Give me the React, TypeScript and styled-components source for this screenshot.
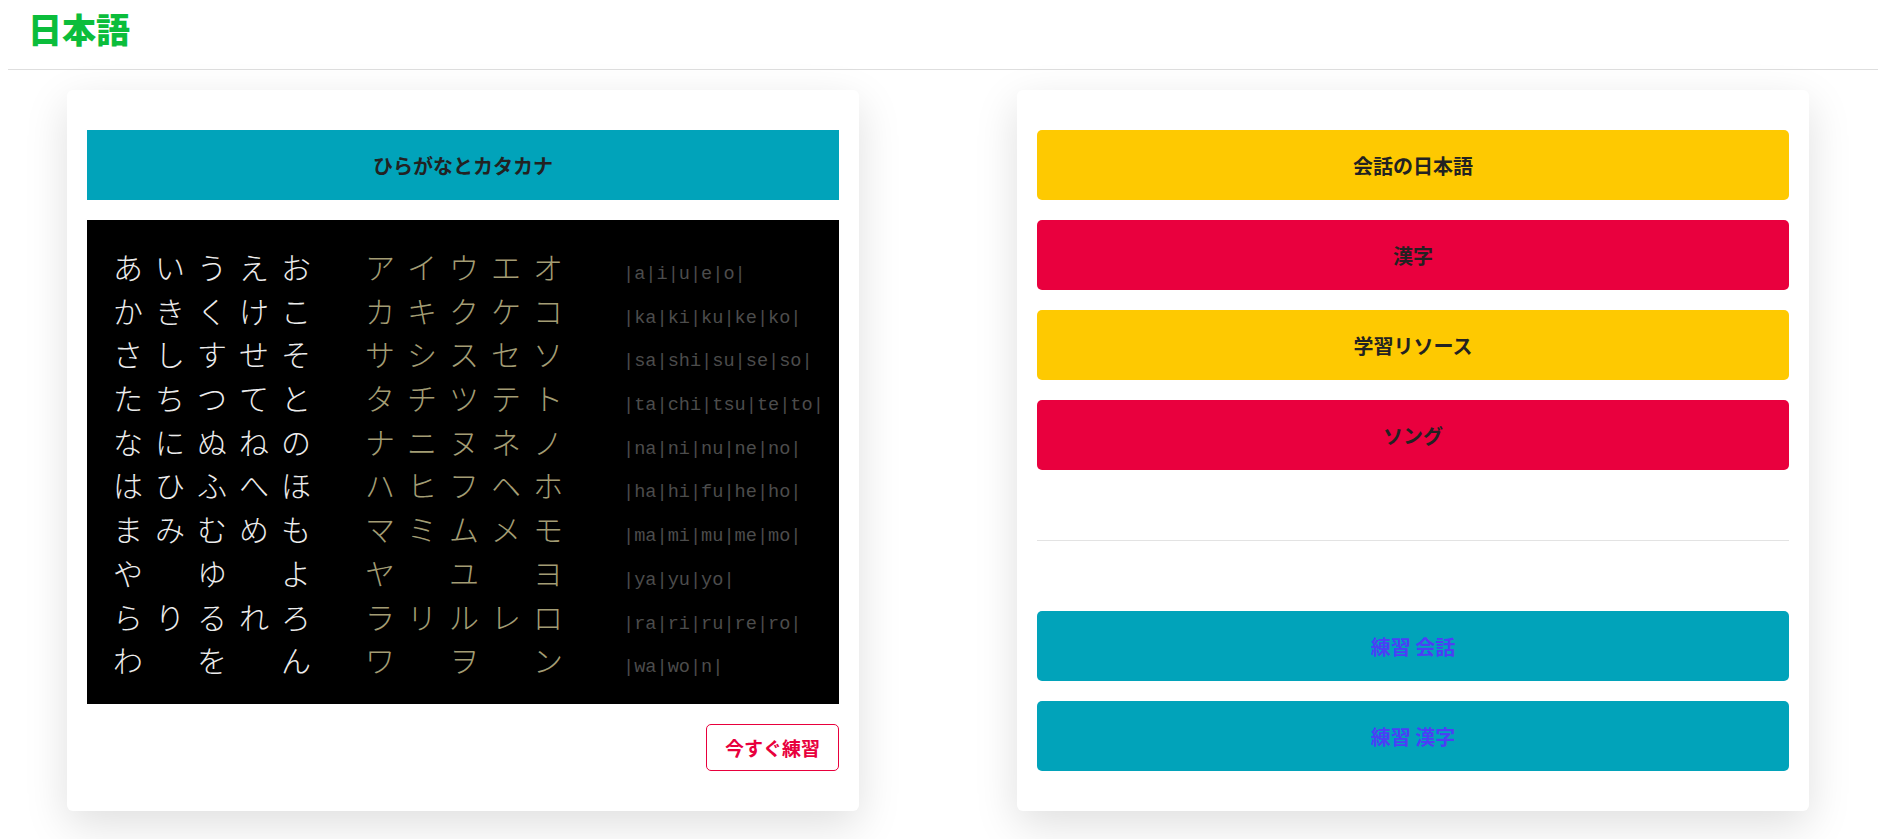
import React from "react";
import styled, { createGlobalStyle } from "styled-components";

const GlobalStyle = createGlobalStyle`
  * { box-sizing: border-box; }
  html, body { background: #ffffff; }
  body {
    margin: 8px;
    font-family: "Noto Sans CJK JP", "Noto Sans", sans-serif;
    color: #212529;
  }
`;

const Header = styled.header`
  height: 62px;
  border-bottom: 1px solid #dedede;
  padding: 0 0 0 20px;
  display: flex;
  align-items: flex-start;
`;

const Title = styled.h1`
  margin: 0;
  font-size: 34px;
  line-height: 42px;
  font-weight: 900;
  color: #0bbd3b;
`;

const Main = styled.main`
  display: grid;
  grid-template-columns: 792px 792px;
  column-gap: 158px;
  padding: 20px 0 40px 59px;
`;

const Card = styled.section`
  background: #ffffff;
  border-radius: 6px;
  box-shadow: 0 14px 44px rgba(0, 0, 0, 0.13);
  padding: 40px 20px;
  display: flex;
  flex-direction: column;
`;

const SectionBar = styled.div`
  height: 70px;
  background: #01a3ba;
  display: flex;
  align-items: center;
  justify-content: center;
  font-size: 20px;
  font-weight: 700;
  color: #222222;
`;

const Chart = styled.div`
  margin-top: 20px;
  height: 484px;
  background: #000000;
  padding: 25px 0 0 20px;
  display: flex;
  flex-direction: column;
`;

const ChartRow = styled.div`
  display: flex;
  align-items: baseline;
  height: 43.7px;
  line-height: 43.7px;
`;

const KanaGroup = styled.div<{ $color: string; $offset: number }>`
  display: grid;
  grid-template-columns: repeat(5, 42px);
  margin-left: ${(p) => p.$offset}px;
  color: ${(p) => p.$color};
  font-size: 30px;
  font-weight: 300;
`;

const KanaCell = styled.span`
  text-align: center;
`;

const Romaji = styled.span`
  margin-left: 54px;
  font-family: "Liberation Mono", "DejaVu Sans Mono", monospace;
  font-size: 18.6px;
  color: #4c4c4c;
  white-space: pre;
`;

const ActionRow = styled.div`
  margin-top: 20px;
  display: flex;
  justify-content: flex-end;
`;

const OutlineButton = styled.button`
  height: 47px;
  padding: 0 18px;
  background: #ffffff;
  border: 1px solid #e8003d;
  border-radius: 5px;
  color: #e8003d;
  font-family: inherit;
  font-size: 19px;
  font-weight: 700;
  cursor: pointer;
`;

const Stack = styled.div`
  display: flex;
  flex-direction: column;
  gap: 20px;
`;

const MenuButton = styled.div<{ $bg: string; $fg: string }>`
  height: 70px;
  border-radius: 5px;
  background: ${(p) => p.$bg};
  color: ${(p) => p.$fg};
  display: flex;
  align-items: center;
  justify-content: center;
  font-size: 20px;
  font-weight: 700;
`;

const Divider = styled.hr`
  margin: 70px 0;
  border: 0;
  border-top: 1px solid #e3e3e3;
`;

const hiragana = [
  "あいうえお",
  "かきくけこ",
  "さしすせそ",
  "たちつてと",
  "なにぬねの",
  "はひふへほ",
  "まみむめも",
  "や ゆ よ",
  "らりるれろ",
  "わ を ん",
];
const katakana = [
  "アイウエオ",
  "カキクケコ",
  "サシスセソ",
  "タチツテト",
  "ナニヌネノ",
  "ハヒフヘホ",
  "マミムメモ",
  "ヤ ユ ヨ",
  "ラリルレロ",
  "ワ ヲ ン",
];
const romaji = [
  "|a|i|u|e|o|",
  "|ka|ki|ku|ke|ko|",
  "|sa|shi|su|se|so|",
  "|ta|chi|tsu|te|to|",
  "|na|ni|nu|ne|no|",
  "|ha|hi|fu|he|ho|",
  "|ma|mi|mu|me|mo|",
  "|ya|yu|yo|",
  "|ra|ri|ru|re|ro|",
  "|wa|wo|n|",
];

const cells = (s: string) => Array.from(s).map((c) => (c === " " ? "" : c));

export default function App() {
  return (
    <>
      <GlobalStyle />
      <Header>
        <Title>日本語</Title>
      </Header>
      <Main>
        <Card>
          <SectionBar>ひらがなとカタカナ</SectionBar>
          <Chart>
            {hiragana.map((row, i) => (
              <ChartRow key={i}>
                <KanaGroup $color="#ececec" $offset={0}>
                  {cells(row).map((c, j) => (
                    <KanaCell key={j}>{c}</KanaCell>
                  ))}
                </KanaGroup>
                <KanaGroup $color="#a39d74" $offset={42}>
                  {cells(katakana[i]).map((c, j) => (
                    <KanaCell key={j}>{c}</KanaCell>
                  ))}
                </KanaGroup>
                <Romaji>{romaji[i]}</Romaji>
              </ChartRow>
            ))}
          </Chart>
          <ActionRow>
            <OutlineButton>今すぐ練習</OutlineButton>
          </ActionRow>
        </Card>
        <Card>
          <Stack>
            <MenuButton $bg="#fec901" $fg="#222222">会話の日本語</MenuButton>
            <MenuButton $bg="#e9003e" $fg="#222222">漢字</MenuButton>
            <MenuButton $bg="#fec901" $fg="#222222">学習リソース</MenuButton>
            <MenuButton $bg="#e9003e" $fg="#222222">ソング</MenuButton>
          </Stack>
          <Divider />
          <Stack>
            <MenuButton $bg="#01a3ba" $fg="#4b3ff5">練習 会話</MenuButton>
            <MenuButton $bg="#01a3ba" $fg="#4b3ff5">練習 漢字</MenuButton>
          </Stack>
        </Card>
      </Main>
    </>
  );
}
